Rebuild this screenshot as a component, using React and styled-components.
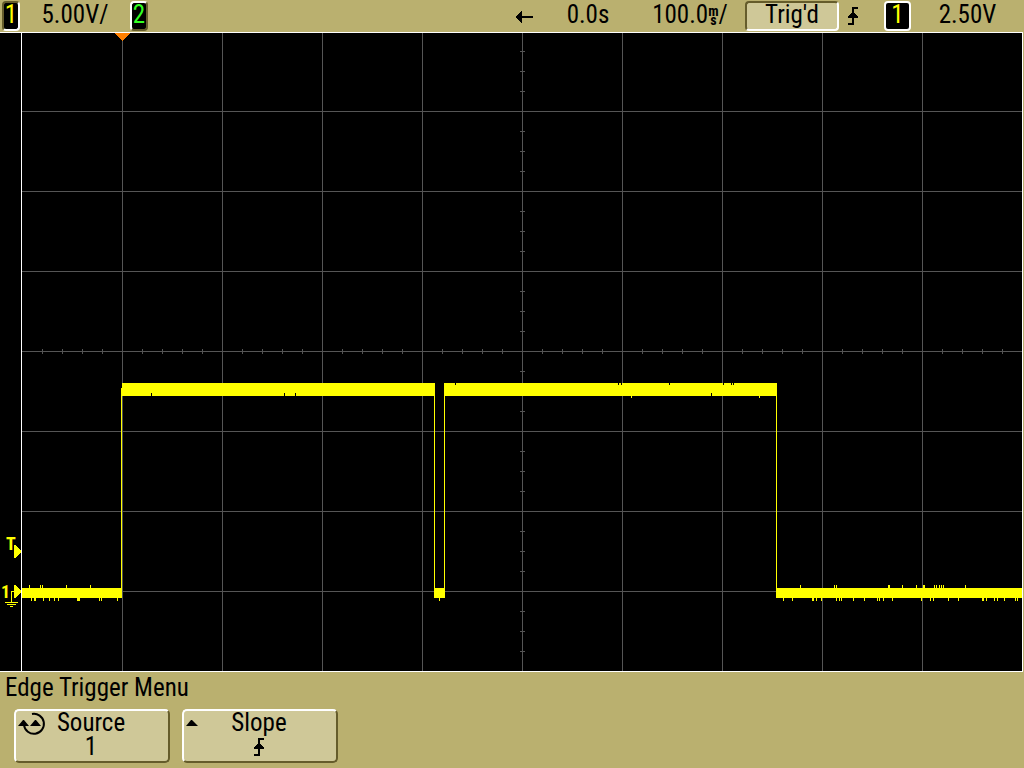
import React from 'react';
import styled, { createGlobalStyle } from 'styled-components';

const khaki = '#bab06f';
const panel = '#cfc898';
const shade = '#655c2b';
const trace = '#ffff00';

const GlobalStyle = createGlobalStyle`
  * {
    box-sizing: border-box;
  }

  body {
    margin: 0;
    background-color: ${khaki};
    color: #000;
    font-family: 'Liberation Sans Narrow', 'Roboto Condensed', 'Liberation Sans', sans-serif;
    font-size: 25px;
    line-height: 24px;
  }
`;

const Scope = styled.div`
  display: grid;
  grid-template-rows: 32px 1fr auto;
  height: 100vh;
`;

const StatusBar = styled.header`
  display: flex;
  align-items: flex-start;
  justify-content: space-between;
  padding: 1px 0 0 2px;
`;

const Group = styled.div`
  display: flex;
  align-items: center;
  height: 30px;
`;

const Channel = styled.button`
  width: ${props => (props.$wide ? '27px' : '18px')};
  height: 30px;
  padding: 0 0 2px;
  border: 2px solid;
  border-color: ${props => props.$edge};
  border-radius: 4px;
  background-color: #000;
  color: ${props => props.$color};
  font: inherit;
`;

const Reading = styled.span`
  width: ${props => props.$width};
  padding-bottom: 2px;
  text-align: center;
  white-space: nowrap;
`;

const Timebase = styled(Reading)`
  display: flex;
  justify-content: center;
  padding-right: 8px;
`;

const Unit = styled.span`
  display: flex;
  flex-direction: column;
  align-items: center;
  padding-top: 4px;
  font-size: 14px;
  font-weight: bold;
  line-height: 9px;
`;

const Status = styled.div`
  width: 94px;
  height: 30px;
  border: 2px solid;
  border-color: ${shade} #fff #fff ${shade};
  border-radius: 4px;
  background-color: ${panel};
  text-align: center;
`;

const EdgeSlot = styled.span`
  display: flex;
  justify-content: center;
  width: 45px;
  padding-right: 18px;
`;

const Screen = styled.main`
  min-height: 0;
  overflow: hidden;
  background-color: #000;

  svg {
    display: block;
    width: 100%;
    height: 100%;
  }
`;

const Menu = styled.footer`
  padding: 4px 14px 5px;
`;

const MenuTitle = styled.h1`
  margin: 0 0 9px -9px;
  font-size: 25px;
  font-weight: normal;
  line-height: 24px;
`;

const SoftKeys = styled.div`
  display: flex;
  gap: 12px;
`;

const SoftKey = styled.button`
  display: grid;
  grid-template-columns: 28px 1fr 30px;
  width: 156px;
  height: 54px;
  padding: 0 2px;
  border: 2px solid;
  border-color: #fff ${shade} ${shade} #fff;
  border-radius: 5px;
  background-color: ${panel};
  color: #000;
  font: inherit;
  text-align: center;
`;

const KeyText = styled.span`
  display: flex;
  flex-direction: column;
  align-items: center;

  svg {
    margin-top: 3px;
  }
`;

const RisingEdge = () => (
  <svg width="10" height="18" viewBox="0 0 10 18" shapeRendering="crispEdges">
    <path d="M4 0h6v2H6v3l4 5v1H6v7H0v-2h4v-5H0v-1l4-5z" />
  </svg>
);

const LeftArrow = () => (
  <svg width="18" height="16" viewBox="0 0 18 16" shapeRendering="crispEdges">
    <path d="M0 9l6-6h1v5h11v2H7v5H6z" />
  </svg>
);

const KnobIcon = () => (
  <svg width="28" height="26" viewBox="0 0 28 26">
    <path d="M14 3a10 10 0 1 1-8 11" fill="none" stroke="#000" strokeWidth="2" />
    <path d="M0 15l5-6h1l5 6zM12 15l5-6h1l5 6z" />
  </svg>
);

const UpIcon = () => (
  <svg width="28" height="26" viewBox="0 0 28 26">
    <path d="M0 15l5-6h1l6 6z" />
  </svg>
);

const range = (from, to, step) => {
  const list = [];
  for (let n = from; n <= to; n += step) list.push(n);
  return list;
};

const columns = range(122, 922, 100);
const rows = range(79, 559, 80);
const xTicks = range(42, 1002, 20);
const yTicks = range(19, 619, 20);

// noise spikes as [x, width]
const upper = [
  [29, 1], [40, 1], [42, 1], [66, 1], [90, 1], [800, 1], [834, 1], [836, 1],
  [888, 2], [902, 1], [916, 1], [923, 2], [934, 1], [936, 1], [939, 1],
  [941, 1], [943, 1], [965, 1],
];
const lower = [
  [31, 1], [34, 2], [43, 1], [49, 1], [54, 1], [58, 1], [77, 3], [99, 1],
  [101, 1], [117, 1], [439, 1], [783, 1], [792, 1], [812, 2], [816, 1],
  [821, 1], [836, 1], [839, 1], [841, 1], [853, 1], [864, 1], [877, 1],
  [879, 1], [883, 1], [892, 1], [921, 1], [930, 1], [933, 1], [948, 1],
  [958, 1], [982, 2], [986, 1], [994, 1], [997, 1], [1004, 1], [1015, 1],
  [1017, 1],
];
const topNotches = [455, 618, 621, 669, 723, 731, 733];
const bottomNotches = [151, 284, 295, 711];
const drips = [631, 759];

const Graticule = () => (
  <g fill="#555">
    {columns.map(x => <rect key={x} x={x} y="1" width="1" height="638" />)}
    {rows.map(y => <rect key={y} x="22" y={y} width="1000" height="1" />)}
    {xTicks.map(x => <rect key={x} x={x} y="317" width="1" height="5" />)}
    {yTicks.map(y => <rect key={y} x="520" y={y} width="5" height="1" />)}
  </g>
);

const Waveform = () => (
  <g>
    <g fill={trace}>
      <rect x="22" y="556" width="100" height="10" />
      <rect x="121" y="356" width="1" height="210" />
      <rect x="122" y="351" width="313" height="13" />
      <rect x="434" y="351" width="1" height="215" />
      <rect x="434" y="556" width="11" height="10" />
      <rect x="444" y="351" width="1" height="215" />
      <rect x="444" y="351" width="333" height="13" />
      <rect x="776" y="351" width="1" height="215" />
      <rect x="776" y="556" width="246" height="10" />
      {upper.map(([x, w]) => <rect key={x} x={x} y="553" width={w} height="3" />)}
      {lower.map(([x, w]) => <rect key={x} x={x} y="566" width={w} height="3" />)}
      {drips.map(x => <rect key={x} x={x} y="364" width="1" height="2" />)}
    </g>
    {topNotches.map(x => <rect key={x} x={x} y="351" width="1" height="2" />)}
    {bottomNotches.map(x => <rect key={x} x={x} y="361" width="1" height="3" />)}
  </g>
);

const Markers = () => (
  <g fill={trace}>
    <text x="6" y="518" fontSize="18" fontWeight="bold">T</text>
    <path d="M14 513h1l6 6v1l-6 6h-1z" />
    <text x="1" y="566" fontSize="18" fontWeight="bold">1</text>
    <path d="M14 553h1l6 6v1l-6 6h-1z" />
    <path d="M11 559h3v1h-2v10h-1zM5 570h13v1H5zM7 572h9v1H7zM10 574h3v1h-3z" />
    <path d="M115 1h15l-7 8h-1z" fill="#ff8000" />
  </g>
);

const App = () => (
  <Scope>
    <GlobalStyle />
    <StatusBar>
      <Group>
        <Channel $color="#ffff00" $edge={`${shade} #fff #fff ${shade}`}>1</Channel>
        <Reading $width="110px">5.00V/</Reading>
        <Channel $color="#33ff22" $edge={`#fff ${shade} ${shade} #fff`}>2</Channel>
      </Group>
      <Group>
        <LeftArrow />
        <Reading $width="110px">0.0s</Reading>
        <Timebase $width="102px">
          100.0
          <Unit>
            <span>m</span>
            <span>s</span>
          </Unit>
          /
        </Timebase>
        <Status>Trig&apos;d</Status>
        <EdgeSlot>
          <RisingEdge />
        </EdgeSlot>
        <Channel $wide $color="#ffff00" $edge="#fff">1</Channel>
        <Reading $width="113px">2.50V</Reading>
      </Group>
    </StatusBar>
    <Screen>
      <svg viewBox="0 0 1024 640" preserveAspectRatio="none" shapeRendering="crispEdges">
        <Graticule />
        <rect x="0" y="0" width="1024" height="1" fill="#fff" />
        <rect x="0" y="639" width="1024" height="1" fill="#fff" />
        <rect x="21" y="0" width="1" height="640" fill="#fff" />
        <rect x="1022" y="0" width="1" height="640" fill="#fff" />
        <rect x="1023" y="0" width="1" height="640" fill={khaki} />
        <Waveform />
        <Markers />
      </svg>
    </Screen>
    <Menu>
      <MenuTitle>Edge Trigger Menu</MenuTitle>
      <SoftKeys>
        <SoftKey>
          <KnobIcon />
          <KeyText>
            <span>Source</span>
            <span>1</span>
          </KeyText>
        </SoftKey>
        <SoftKey>
          <UpIcon />
          <KeyText>
            <span>Slope</span>
            <RisingEdge />
          </KeyText>
        </SoftKey>
      </SoftKeys>
    </Menu>
  </Scope>
);

export default App;
